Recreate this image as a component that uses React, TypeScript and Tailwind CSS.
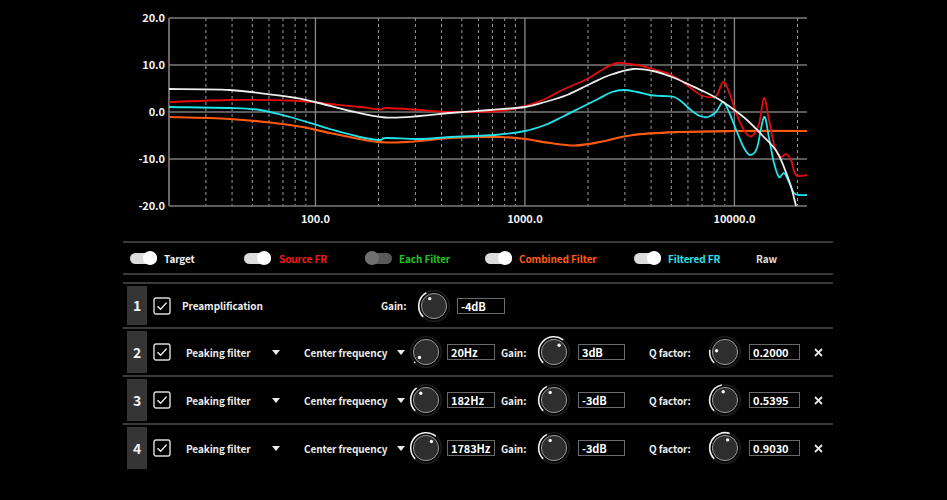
import React from "react";

const X = (f: number) => 169 + (Math.log10(f) - Math.log10(20)) * 209.5;

type P = [number, number];

function smooth(pts: P[]): string {
  let d = `M${pts[0][0]},${pts[0][1]}`;
  for (let i = 0; i < pts.length - 1; i++) {
    const p0 = pts[i - 1] || pts[i];
    const p1 = pts[i];
    const p2 = pts[i + 1];
    const p3 = pts[i + 2] || p2;
    const c1x = p1[0] + (p2[0] - p0[0]) / 6;
    const c1y = p1[1] + (p2[1] - p0[1]) / 6;
    const c2x = p2[0] - (p3[0] - p1[0]) / 6;
    const c2y = p2[1] - (p3[1] - p1[1]) / 6;
    d += ` C${c1x.toFixed(1)},${c1y.toFixed(1)} ${c2x.toFixed(1)},${c2y.toFixed(1)} ${p2[0]},${p2[1]}`;
  }
  return d;
}

const white: P[] = [
  [169, 89], [230, 90], [290, 97], [315, 102], [350, 111], [385, 117.5], [420, 116],
  [450, 113], [490, 110], [525, 107], [545, 102], [567, 95], [590, 84], [610, 75],
  [633, 69], [653, 71], [672, 77], [690, 85], [705, 92], [720, 100], [733, 109],
  [747, 120], [762, 135], [777, 152], [787, 175], [792, 190], [796, 206],
];

const red: P[] = [
  [169, 102], [230, 100], [300, 101], [330, 104], [360, 107], [380, 109.5], [387, 108],
  [420, 110], [450, 112], [500, 111], [525, 106], [545, 99], [562, 90], [587, 79],
  [605, 68], [617, 63], [630, 64], [642, 66], [656, 70], [667, 73], [680, 80],
  [692, 89], [703, 96], [716, 96], [723, 82], [729, 92], [737, 115], [745, 132],
  [752, 136], [759, 124], [764, 98], [769, 120], [775, 148], [781, 157], [786, 154],
  [791, 160], [796, 175], [807, 175],
];

const cyan: P[] = [
  [169, 107], [230, 108], [260, 110], [290, 117], [330, 129], [360, 137], [380, 140],
  [386, 138], [420, 139], [450, 137], [495, 135], [525, 131], [545, 125], [562, 117],
  [582, 107], [598, 99], [612, 92], [624, 90], [637, 92], [650, 95], [662, 96],
  [674, 97], [682, 102], [692, 111], [700, 116], [708, 117], [716, 112], [723, 102],
  [729, 112], [737, 132], [744, 148], [750, 155], [757, 148], [764, 117], [769, 138],
  [774, 163], [779, 177], [784, 173], [789, 182], [794, 193], [799, 195], [807, 195],
];

const orange: P[] = [
  [169, 117], [230, 119], [290, 125], [330, 133], [370, 141], [390, 142.5], [420, 141],
  [450, 138], [500, 137], [525, 139], [550, 143], [575, 145.5], [600, 142], [633, 135],
  [680, 132], [734, 131], [807, 131],
];

const dashedFreqs = [30, 40, 50, 60, 70, 80, 90, 200, 300, 400, 500, 600, 700, 800, 900, 2000, 3000, 4000, 5000, 6000, 7000, 8000, 9000, 20000];
const yGrid = [18, 65, 112, 159, 206];
const yLabels = ["20.0", "10.0", "0.0", "-10.0", "-20.0"];

function Chart() {
  return (
    <svg width="947" height="241" viewBox="0 0 947 241" className="block">
      {dashedFreqs.map((f) => (
        <line key={f} x1={X(f)} x2={X(f)} y1={18} y2={206} stroke="#9a9a9a" strokeWidth="1" strokeDasharray="3 3" />
      ))}
      {yGrid.map((y) => (
        <line key={y} x1={169} x2={807} y1={y} y2={y} stroke="#7a7a7a" strokeWidth="1.3" />
      ))}
      {[100, 1000, 10000].map((f) => (
        <line key={f} x1={X(f)} x2={X(f)} y1={18} y2={206} stroke="#8a8a8a" strokeWidth="1.3" />
      ))}
      <line x1={169} x2={169} y1={18} y2={206} stroke="#8a8a8a" strokeWidth="1.5" />
      {yLabels.map((t, i) => (
        <text key={t} x={165} y={yGrid[i] + 4} textAnchor="end" fill="#f2f2f2" fontSize="11" fontWeight="700" letterSpacing="-0.1">
          {t}
        </text>
      ))}
      {[["100.0", 100], ["1000.0", 1000], ["10000.0", 10000]].map(([t, f]) => (
        <text key={t as string} x={X(f as number)} y={223} textAnchor="middle" fill="#f2f2f2" fontSize="11" fontWeight="700" letterSpacing="-0.1">
          {t}
        </text>
      ))}
      <path d={smooth(orange)} fill="none" stroke="#ff5a10" strokeWidth="2.2" />
      <path d={smooth(cyan)} fill="none" stroke="#20e4ea" strokeWidth="1.8" />
      <path d={smooth(red)} fill="none" stroke="#e50c0c" strokeWidth="1.8" />
      <path d={smooth(white)} fill="none" stroke="#ececec" strokeWidth="1.8" />
    </svg>
  );
}

function Toggle({ on }: { on: boolean }) {
  return (
    <span className="relative inline-flex items-center w-[27px] h-[14px] shrink-0">
      <span className={`block w-[27px] h-[11px] rounded-full ${on ? "bg-[#dcdcdc]" : "bg-[#5a5a5a]"}`} />
      {on ? (
        <span className="absolute right-0 top-0 w-[14px] h-[14px] rounded-full bg-white" />
      ) : (
        <span className="absolute left-0 top-0 w-[14px] h-[14px] rounded-full bg-[#707070]" />
      )}
    </span>
  );
}

function Line() {
  return <div className="h-[2px] bg-[#3a3a3a]" />;
}

function NumBox({ n }: { n: number }) {
  return (
    <div className="ml-[4px] w-[20px] self-stretch my-[2px] bg-[#353535] flex items-center justify-center text-[14px] font-bold text-[#f0f0f0] shrink-0">
      {n}
    </div>
  );
}

function Check() {
  return (
    <svg width="18" height="18" viewBox="0 0 18 18" className="ml-[6px] shrink-0">
      <rect x="1" y="1" width="16" height="16" rx="2" fill="none" stroke="#dadada" strokeWidth="1.4" />
      <polyline points="4.5,9.2 7.6,12.3 13.6,5.6" fill="none" stroke="#f0f0f0" strokeWidth="1.4" />
    </svg>
  );
}

function Knob({ angle }: { angle: number }) {
  const c = 17;
  const r = 15.3;
  const start = -135;
  const pol = (a: number, rad: number): P => {
    const t = (a * Math.PI) / 180;
    return [c + rad * Math.sin(t), c - rad * Math.cos(t)];
  };
  const [sx, sy] = pol(start, r);
  const [ex, ey] = pol(angle, r);
  const large = angle - start > 180 ? 1 : 0;
  const [ix, iy] = pol(angle, 8.5);
  return (
    <svg width="34" height="34" viewBox="0 0 34 34" className="shrink-0">
      <circle cx={c} cy={c} r={r} fill="none" stroke="#1c1c1c" strokeWidth="1.6" />
      {angle - start > 3 && (
        <path d={`M${sx},${sy} A${r},${r} 0 ${large} 1 ${ex},${ey}`} fill="none" stroke="#ededed" strokeWidth="1.6" />
      )}
      <circle cx={c} cy={c} r={12.6} fill="#2e2e2e" stroke="#9a9a9a" strokeWidth="1" />
      <circle cx={ix} cy={iy} r={1.7} fill="#f5f5f5" />
    </svg>
  );
}

function Field({ v, w }: { v: string; w: string }) {
  return (
    <div className={`${w} h-[16px] border border-[#6a6a6a] bg-black text-[11px] font-bold text-white leading-[14px] pl-[3px] shrink-0 whitespace-nowrap tracking-[-0.1px]`}>
      {v}
    </div>
  );
}

function Tri() {
  return (
    <svg width="8" height="5" viewBox="0 0 8 5" className="shrink-0">
      <polygon points="0,0 8,0 4,5" fill="#eaeaea" />
    </svg>
  );
}

function Close() {
  return (
    <svg width="9" height="9" viewBox="0 0 9 9" className="ml-[14px] shrink-0">
      <line x1="1" y1="1" x2="8" y2="8" stroke="#e6e6e6" strokeWidth="1.8" />
      <line x1="8" y1="1" x2="1" y2="8" stroke="#e6e6e6" strokeWidth="1.8" />
    </svg>
  );
}

function FilterRow({ n, freq, fa, gain, ga, q, qa }: { n: number; freq: string; fa: number; gain: string; ga: number; q: string; qa: number }) {
  return (
    <div className="h-[46px] flex items-center text-[10px] font-bold text-[#ececec] whitespace-nowrap tracking-[-0.1px]">
      <NumBox n={n} />
      <Check />
      <span className="ml-[15px] w-[86px] shrink-0">Peaking filter</span>
      <span className="w-[32px] shrink-0 flex"><Tri /></span>
      <span className="w-[93px] shrink-0">Center frequency</span>
      <span className="w-[14px] shrink-0 flex"><Tri /></span>
      <span className="w-[31px] shrink-0 flex justify-start -ml-[2px]"><Knob angle={fa} /></span>
      <span className="ml-[7px] flex"><Field v={freq} w="w-[48px]" /></span>
      <span className="ml-[6px] w-[36px] shrink-0">Gain:</span>
      <Knob angle={ga} />
      <span className="ml-[7px] flex"><Field v={gain} w="w-[47px]" /></span>
      <span className="ml-[24px] w-[59px] shrink-0">Q factor:</span>
      <Knob angle={qa} />
      <span className="ml-[7px] flex"><Field v={q} w="w-[51px]" /></span>
      <Close />
    </div>
  );
}

export default function App() {
  return (
    <div className="w-[947px] h-[500px] bg-black overflow-hidden font-['Noto_Sans_CJK_SC','Noto_Sans',sans-serif]">
      <Chart />
      <div className="ml-[123px] w-[710px]">
        <Line />
        <div className="h-[30px] flex items-center text-[10px] font-bold whitespace-nowrap tracking-[-0.1px]">
          <div className="ml-[7px] w-[114px] flex items-center shrink-0">
            <Toggle on />
            <span className="ml-[7px] text-[#f0f0f0]">Target</span>
          </div>
          <div className="w-[121px] flex items-center shrink-0">
            <Toggle on />
            <span className="ml-[8px] text-[#f01818]">Source FR</span>
          </div>
          <div className="w-[120px] flex items-center shrink-0">
            <Toggle on={false} />
            <span className="ml-[7px] text-[#1ec41e]">Each Filter</span>
          </div>
          <div className="w-[149px] flex items-center shrink-0">
            <Toggle on />
            <span className="ml-[7px] text-[#ff5a16]">Combined Filter</span>
          </div>
          <div className="w-[122px] flex items-center shrink-0">
            <Toggle on />
            <span className="ml-[7px] text-[#2ce2ea]">Filtered FR</span>
          </div>
          <span className="text-[#dedede]">Raw</span>
        </div>
        <Line />
        <div className="h-[7px]" />
        <Line />
        <div className="h-[43px] flex items-center text-[10px] font-bold text-[#ececec] whitespace-nowrap tracking-[-0.1px]">
          <NumBox n={1} />
          <Check />
          <span className="ml-[11px] w-[199px] shrink-0">Preamplification</span>
          <span className="w-[36px] shrink-0">Gain:</span>
          <Knob angle={-30} />
          <span className="ml-[6px] flex"><Field v="-4dB" w="w-[48px]" /></span>
        </div>
        <Line />
        <FilterRow n={2} freq="20Hz" fa={-130} gain="3dB" ga={37} q="0.2000" qa={-82} />
        <Line />
        <FilterRow n={3} freq="182Hz" fa={-38} gain="-3dB" ga={-27} q="0.5395" qa={-12} />
        <Line />
        <FilterRow n={4} freq="1783Hz" fa={40} gain="-3dB" ga={-27} q="0.9030" qa={18} />
      </div>
    </div>
  );
}
